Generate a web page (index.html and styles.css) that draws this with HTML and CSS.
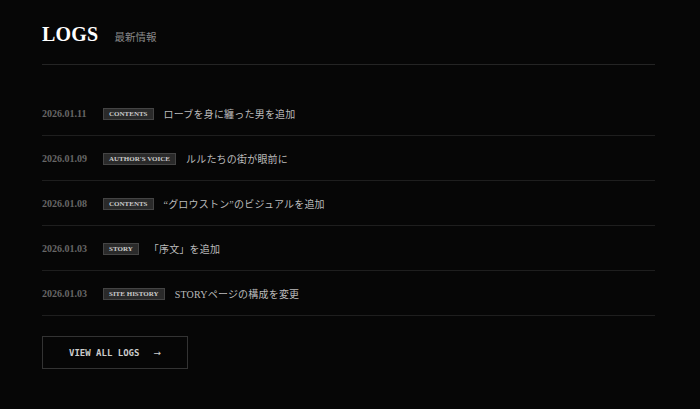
FILE: index.html
```html
<!DOCTYPE html>
<html lang="ja">
<head>
<meta charset="utf-8">
<link rel="stylesheet" href="styles.css">
</head>
<body>
<section class="logs">
  <header class="logs-head">
    <h1 class="logs-title">LOGS</h1>
    <span class="logs-sub">最新情報</span>
  </header>
  <ul class="log-list">
    <li class="log-row"><time class="log-date">2026.01.11</time><span class="log-tag">CONTENTS</span><span class="log-text">ローブを身に纏った男を追加</span></li>
    <li class="log-row"><time class="log-date">2026.01.09</time><span class="log-tag">AUTHOR'S VOICE</span><span class="log-text">ルルたちの街が眼前に</span></li>
    <li class="log-row"><time class="log-date">2026.01.08</time><span class="log-tag">CONTENTS</span><span class="log-text">“グロウストン”のビジュアルを追加</span></li>
    <li class="log-row"><time class="log-date">2026.01.03</time><span class="log-tag">STORY</span><span class="log-text">「序文」を追加</span></li>
    <li class="log-row"><time class="log-date">2026.01.03</time><span class="log-tag">SITE HISTORY</span><span class="log-text">STORYページの構成を変更</span></li>
  </ul>
  <a class="view-all" href="#">VIEW ALL LOGS<span class="arrow">→</span></a>
</section>
</body>
</html>
```

FILE: styles.css
```css
html, body {
  margin: 0;
  padding: 0;
  background: #060606;
}
body {
  font-family: "Liberation Serif", "Noto Sans CJK JP", serif;
  color: #bbb;
}
.logs {
  width: 613px;
  padding: 23px 0 0 42px;
}
.logs-head {
  display: flex;
  align-items: baseline;
  gap: 16px;
  padding-bottom: 19px;
  border-bottom: 1px solid #242424;
}
.logs-title {
  margin: 0;
  font-size: 20px;
  line-height: 22px;
  font-weight: bold;
  color: #fff;
  letter-spacing: 0.2px;
}
.logs-sub {
  font-size: 10.5px;
  color: #888;
  font-family: "Noto Sans CJK JP", sans-serif;
}
.log-list {
  list-style: none;
  margin: 26px 0 0;
  padding: 0;
}
.log-row {
  display: flex;
  align-items: center;
  height: 44px;
  border-bottom: 1px solid #1e1e1e;
}
.log-date {
  width: 61px;
  font-size: 10px;
  color: #666;
  font-weight: bold;
}
.log-tag {
  box-sizing: border-box;
  height: 12px;
  padding: 0 5px;
  background: #2a2a2a;
  border: 1px solid #444;
  color: #ccc;
  font-size: 7px;
  font-weight: bold;
  line-height: 10px;
  margin-right: 10px;
  margin-top: 1px;
}
.log-text {
  font-size: 10px;
  color: #bbb;
  font-family: "Liberation Serif", "Noto Sans CJK JP", serif;
  letter-spacing: 0.2px;
}
.view-all {
  display: inline-flex;
  align-items: center;
  box-sizing: border-box;
  width: 146px;
  height: 33px;
  margin-top: 20px;
  padding-left: 26px;
  border: 1px solid #333;
  color: #ccc;
  text-decoration: none;
  font-family: "DejaVu Sans Mono", monospace;
  font-size: 9px;
  font-weight: bold;
  letter-spacing: 0;
}
.arrow {
  margin-left: 14px;
  font-family: "DejaVu Sans", sans-serif;
  font-weight: normal;
  font-size: 9px;
}
```
